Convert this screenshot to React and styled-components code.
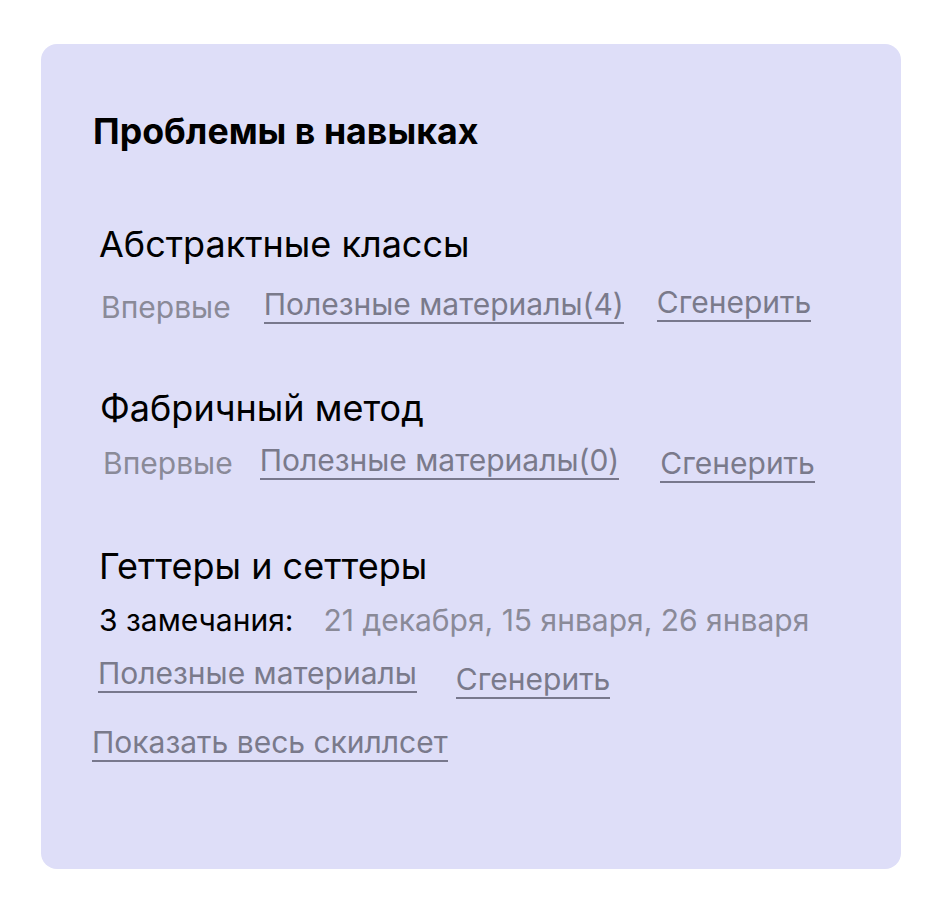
import styled, { createGlobalStyle } from "styled-components";

const GlobalStyle = createGlobalStyle`
  body {
    margin: 0;
    background: #ffffff;
    font-family: Inter, "Noto Sans", "Liberation Sans", sans-serif;
  }
`;

// nudge = small vertical drop of an item inside its row, as in the mockup
const skills = [
  {
    title: "Абстрактные классы",
    top: 69,
    indent: 6,
    rows: [
      {
        top: 18,
        indent: 2,
        items: [
          { kind: "label", text: "Впервые", nudge: 5 },
          { kind: "link", text: "Полезные материалы(4)", nudge: 2, gap: 33 },
          { kind: "link", text: "Сгенерить", nudge: 0, gap: 33 },
        ],
      },
    ],
  },
  {
    title: "Фабричный метод",
    top: 61,
    indent: 7,
    rows: [
      {
        top: 12,
        indent: 3,
        items: [
          { kind: "label", text: "Впервые", nudge: 3 },
          { kind: "link", text: "Полезные материалы(0)", nudge: 0, gap: 27 },
          { kind: "link", text: "Сгенерить", nudge: 3, gap: 41 },
        ],
      },
    ],
  },
  {
    title: "Геттеры и сеттеры",
    top: 61,
    indent: 6,
    rows: [
      {
        top: 14,
        indent: 0,
        items: [
          { kind: "strong", text: "3 замечания:", nudge: 0 },
          { kind: "label", text: "21 декабря, 15 января, 26 января", nudge: 0, gap: 30 },
        ],
      },
      {
        top: 17,
        indent: -1,
        items: [
          { kind: "link", text: "Полезные материалы", nudge: 0 },
          { kind: "link", text: "Сгенерить", nudge: 6, gap: 39 },
        ],
      },
    ],
  },
];

const renderItem = ({ kind, text, nudge, gap = 0 }) => {
  if (kind === "link") {
    return (
      <Link key={text} $nudge={nudge} $gap={gap}>
        {text}
      </Link>
    );
  }
  return (
    <Label key={text} $nudge={nudge} $gap={gap} $strong={kind === "strong"}>
      {text}
    </Label>
  );
};

const App = () => {
  return (
    <>
      <GlobalStyle />
      <Card>
        <Heading>Проблемы в навыках</Heading>
        {skills.map(({ title, top, indent, rows }) => (
          <Skill key={title} $top={top} $indent={indent}>
            <SkillTitle>{title}</SkillTitle>
            {rows.map((row, i) => (
              <Row key={i} $top={row.top} $indent={row.indent}>
                {row.items.map(renderItem)}
              </Row>
            ))}
          </Skill>
        ))}
        <ShowAll>Показать весь скиллсет</ShowAll>
      </Card>
    </>
  );
};

export default App;

const Card = styled.section`
  margin: 44px 0 0 41px;
  width: 860px;
  height: 825px;
  box-sizing: border-box;
  padding: 65px 0 0 52px;
  background: #dedef8;
  border-radius: 16px;
  display: flex;
  flex-direction: column;
  align-items: flex-start;
`;

const Heading = styled.h2`
  margin: 0;
  font-size: 35.7px;
  line-height: 44px;
  font-weight: 700;
  color: #000;
`;

const Skill = styled.div`
  display: flex;
  flex-direction: column;
  align-items: flex-start;
  margin-top: ${({ $top }) => $top}px;
  margin-left: ${({ $indent }) => $indent}px;
`;

const SkillTitle = styled.h3`
  margin: 0;
  font-size: 36px;
  line-height: 44px;
  font-weight: 400;
  color: #000;
`;

const Row = styled.div`
  display: flex;
  align-items: flex-start;
  margin-top: ${({ $top }) => $top}px;
  margin-left: ${({ $indent }) => $indent}px;
  font-size: 30px;
  line-height: 36px;
`;

const Label = styled.span`
  color: ${({ $strong }) => ($strong ? "#000" : "#8a8a98")};
  margin-top: ${({ $nudge = 0 }) => $nudge}px;
  margin-left: ${({ $gap = 0 }) => $gap}px;
`;

const Link = styled.a`
  color: #7a7a8b;
  text-decoration: none;
  border-bottom: 2px solid #78788d;
  margin-top: ${({ $nudge = 0 }) => $nudge}px;
  margin-left: ${({ $gap = 0 }) => $gap}px;
  cursor: pointer;
`;

const ShowAll = styled(Link)`
  margin-top: 25px;
  margin-left: -1px;
  font-size: 30px;
  line-height: 36px;
`;
